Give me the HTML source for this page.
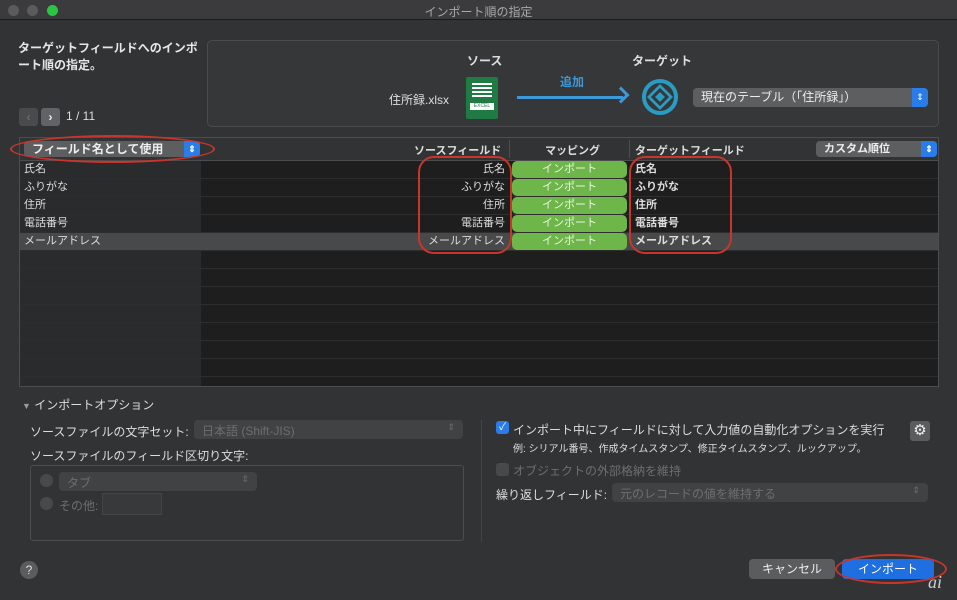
<!DOCTYPE html>
<html><head><meta charset="utf-8"><style>
*{margin:0;padding:0;box-sizing:border-box}
body{width:957px;height:600px;background:#323334;font-family:"Liberation Sans","Noto Sans CJK JP",sans-serif;color:#ddd;position:relative;overflow:hidden;font-size:12px}
.a{position:absolute}
.b{font-weight:bold}
.sel{position:absolute;background:#5d5e60;border-radius:4px;color:#eee;font-size:12px;padding:1px 8px}
.sel i{position:absolute;right:0;top:0;bottom:0;width:16px;background:#2a7de8;border-radius:0 4px 4px 0;color:#fff;font-style:normal;font-size:9px;text-align:center;line-height:16px}
.row{position:absolute;left:20px;width:918px;height:18px;border-bottom:1px solid #2e2e2e}
.red{position:absolute;border:2px solid #c8352c;border-radius:16px}
.imp{position:absolute;left:512px;width:115px;height:17px;background:#6eb64a;border-radius:5px;color:#eaf5e4;text-align:center;font-size:11px;line-height:17px}
.dis{position:absolute;background:#414244;border-radius:4px;color:#6e6e70;font-size:12px;padding:2px 8px}
</style></head><body>
<div class="a" style="left:0;top:0;width:957px;height:20px;background:#3b3b3d;border-bottom:1px solid #1b1b1b"></div>
<div class="a" style="left:8px;top:5px;width:11px;height:11px;border-radius:50%;background:#5b5b5d"></div>
<div class="a" style="left:27px;top:5px;width:11px;height:11px;border-radius:50%;background:#5b5b5d"></div>
<div class="a" style="left:47px;top:5px;width:11px;height:11px;border-radius:50%;background:#2ac544"></div>
<div class="a" style="left:0;width:957px;top:3px;text-align:center;color:#a8a8a8;font-size:12px">インポート順の指定</div>

<div class="a b" style="left:18px;top:40px;width:190px;font-size:12px;line-height:17px;color:#e6e6e6">ターゲットフィールドへのインポート順の指定。</div>
<div class="a" style="left:19px;top:108px;width:19px;height:18px;background:#4a4b4d;border-radius:3px;color:#777;text-align:center;line-height:18px">&lsaquo;</div>
<div class="a" style="left:41px;top:108px;width:19px;height:18px;background:#626366;border-radius:3px;color:#eee;text-align:center;line-height:18px;font-weight:bold">&rsaquo;</div>
<div class="a" style="left:66px;top:109px;font-size:12px;color:#ddd">1 / 11</div>

<div class="a" style="left:207px;top:40px;width:732px;height:87px;border:1px solid #4a4b4d;border-radius:5px;background:#363739"></div>
<div class="a b" style="left:467px;top:52px;font-size:12px">ソース</div>
<div class="a b" style="left:632px;top:52px;font-size:12px">ターゲット</div>
<div class="a" style="left:389px;top:91px;font-size:12px">住所録.xlsx</div>
<div class="a" style="left:466px;top:77px;width:32px;height:42px;background:#1f7a44;border-radius:2px"><div style="margin:6px 6px 0;height:14px;background:repeating-linear-gradient(#fff 0 2px,transparent 2px 4px)"></div><div style="margin:6px 4px 0;height:7px;background:#fff;font-size:5px;color:#1f7a44;text-align:center;line-height:7px">EXCEL</div></div>
<div class="a" style="left:560px;top:73px;color:#3d98d8;font-size:12px;font-weight:bold">追加</div>
<div class="a" style="left:517px;top:96px;width:106px;height:3px;background:#3d98d8"></div>
<div class="a" style="left:615px;top:89px;width:12px;height:12px;border-top:3px solid #3d98d8;border-right:3px solid #3d98d8;transform:rotate(45deg)"></div>
<svg class="a" style="left:641px;top:78px" width="38" height="38" viewBox="0 0 38 38"><circle cx="19" cy="19" r="16" fill="none" stroke="#2a9cc4" stroke-width="4"/><path d="M19 6 L32 19 L19 32 L6 19Z" fill="#2a9cc4"/><path d="M19 12 L26 19 L19 26 L12 19Z" fill="none" stroke="#363739" stroke-width="3"/></svg>
<div class="sel" style="left:693px;top:88px;width:235px;height:19px;line-height:17px">現在のテーブル（「住所録」）<i style="line-height:19px">⇕</i></div>

<div class="a" style="left:19px;top:137px;width:920px;height:250px;border:1px solid #4c4d4f;background:#1e1e1e"></div>
<div class="a" style="left:20px;top:138px;width:918px;height:23px;background:#323334;border-bottom:1px solid #4c4d4f"></div>
<div class="a" style="left:20px;top:161px;width:181px;height:225px;background:#2a2b2c"></div>
<div class="sel b" style="left:24px;top:141px;width:176px;height:16px;line-height:14px">フィールド名として使用<i>⇕</i></div>
<div class="a b" style="left:414px;top:142px;font-size:11px">ソースフィールド</div>
<div class="a" style="left:509px;top:140px;width:1px;height:18px;background:#4c4d4f"></div>
<div class="a b" style="left:545px;top:142px;font-size:11px">マッピング</div>
<div class="a" style="left:629px;top:140px;width:1px;height:18px;background:#4c4d4f"></div>
<div class="a b" style="left:635px;top:142px;font-size:11px">ターゲットフィールド</div>
<div class="sel b" style="left:816px;top:141px;width:121px;height:16px;line-height:14px;font-size:11px">カスタム順位<i>⇕</i></div>

<div class="row" style="top:161px"></div><div class="row" style="top:179px"></div><div class="row" style="top:197px"></div><div class="row" style="top:215px"></div><div class="row" style="top:233px;background:#48494b"></div>
<div class="row" style="top:251px"></div><div class="row" style="top:269px"></div><div class="row" style="top:287px"></div><div class="row" style="top:305px"></div><div class="row" style="top:323px"></div><div class="row" style="top:341px"></div><div class="row" style="top:359px"></div>

<div class="a" style="left:24px;top:160px;font-size:11px;line-height:18px">氏名<br>ふりがな<br>住所<br>電話番号<br>メールアドレス</div>
<div class="a" style="left:400px;width:105px;text-align:right;top:160px;font-size:11px;line-height:18px">氏名<br>ふりがな<br>住所<br>電話番号<br>メールアドレス</div>
<div class="imp" style="top:161px">インポート</div><div class="imp" style="top:179px">インポート</div><div class="imp" style="top:197px">インポート</div><div class="imp" style="top:215px">インポート</div><div class="imp" style="top:233px">インポート</div>
<div class="a b" style="left:635px;top:160px;font-size:11px;line-height:18px">氏名<br>ふりがな<br>住所<br>電話番号<br>メールアドレス</div>

<div class="red" style="left:10px;top:135px;width:205px;height:28px;border-radius:50%"></div>
<div class="red" style="left:418px;top:156px;width:94px;height:98px"></div>
<div class="red" style="left:629px;top:156px;width:103px;height:98px"></div>

<div class="a" style="left:22px;top:396px;font-size:12px;color:#ddd"><span style="font-size:9px;color:#999">▼</span> インポートオプション</div>
<div class="a" style="left:30px;top:423px;font-size:12px">ソースファイルの文字セット:</div>
<div class="dis" style="left:194px;top:420px;width:269px;height:19px">日本語 (Shift-JIS)<span style="float:right;font-size:9px">⇕</span></div>
<div class="a" style="left:30px;top:447px;font-size:12px">ソースファイルのフィールド区切り文字:</div>
<div class="a" style="left:30px;top:465px;width:434px;height:76px;border:1px solid #4c4d4f;border-radius:3px"></div>
<div class="a" style="left:40px;top:474px;width:13px;height:13px;border-radius:50%;background:#48494b"></div>
<div class="dis" style="left:59px;top:472px;width:198px;height:19px">タブ<span style="float:right;font-size:9px">⇕</span></div>
<div class="a" style="left:40px;top:497px;width:13px;height:13px;border-radius:50%;background:#48494b"></div>
<div class="a" style="left:59px;top:497px;color:#6e6e70">その他:</div>
<div class="a" style="left:102px;top:493px;width:60px;height:22px;background:#38393b;border:1px solid #444"></div>
<div class="a" style="left:481px;top:420px;width:1px;height:122px;background:#444"></div>

<div class="a" style="left:496px;top:421px;width:13px;height:13px;border-radius:3px;background:#2a7de8;color:#fff;font-size:10px;text-align:center;line-height:13px">✓</div>
<div class="a" style="left:513px;top:421px;font-size:12px">インポート中にフィールドに対して入力値の自動化オプションを実行</div>
<div class="a" style="left:513px;top:440px;font-size:10px">例: シリアル番号、作成タイムスタンプ、修正タイムスタンプ、ルックアップ。</div>
<div class="a" style="left:910px;top:421px;width:20px;height:20px;background:#5b5c5e;border-radius:3px;color:#eee;text-align:center;line-height:20px;font-size:15px">⚙</div>
<div class="a" style="left:496px;top:463px;width:13px;height:13px;border-radius:3px;background:#48494b"></div>
<div class="a" style="left:513px;top:462px;color:#6e6e70">オブジェクトの外部格納を維持</div>
<div class="a" style="left:496px;top:486px;font-size:12px">繰り返しフィールド:</div>
<div class="dis" style="left:612px;top:483px;width:316px;height:19px">元のレコードの値を維持する<span style="float:right;font-size:9px">⇕</span></div>

<div class="a" style="left:20px;top:561px;width:18px;height:18px;border-radius:50%;background:#5b5c5e;color:#ddd;text-align:center;line-height:18px;font-size:12px">?</div>
<div class="a" style="left:749px;top:559px;width:86px;height:20px;border-radius:4px;background:#5b5c5e;color:#eee;text-align:center;line-height:20px;font-size:12px">キャンセル</div>
<div class="a" style="left:842px;top:559px;width:92px;height:20px;border-radius:4px;background:#1f6fe0;color:#fff;text-align:center;line-height:20px;font-size:12px">インポート</div>
<div class="red" style="left:835px;top:554px;width:112px;height:30px;border-radius:50%"></div>
<div class="a" style="left:928px;top:572px;color:#ccc;font-style:italic;font-size:18px;font-family:'Liberation Serif',serif">ai</div>
</body></html>
